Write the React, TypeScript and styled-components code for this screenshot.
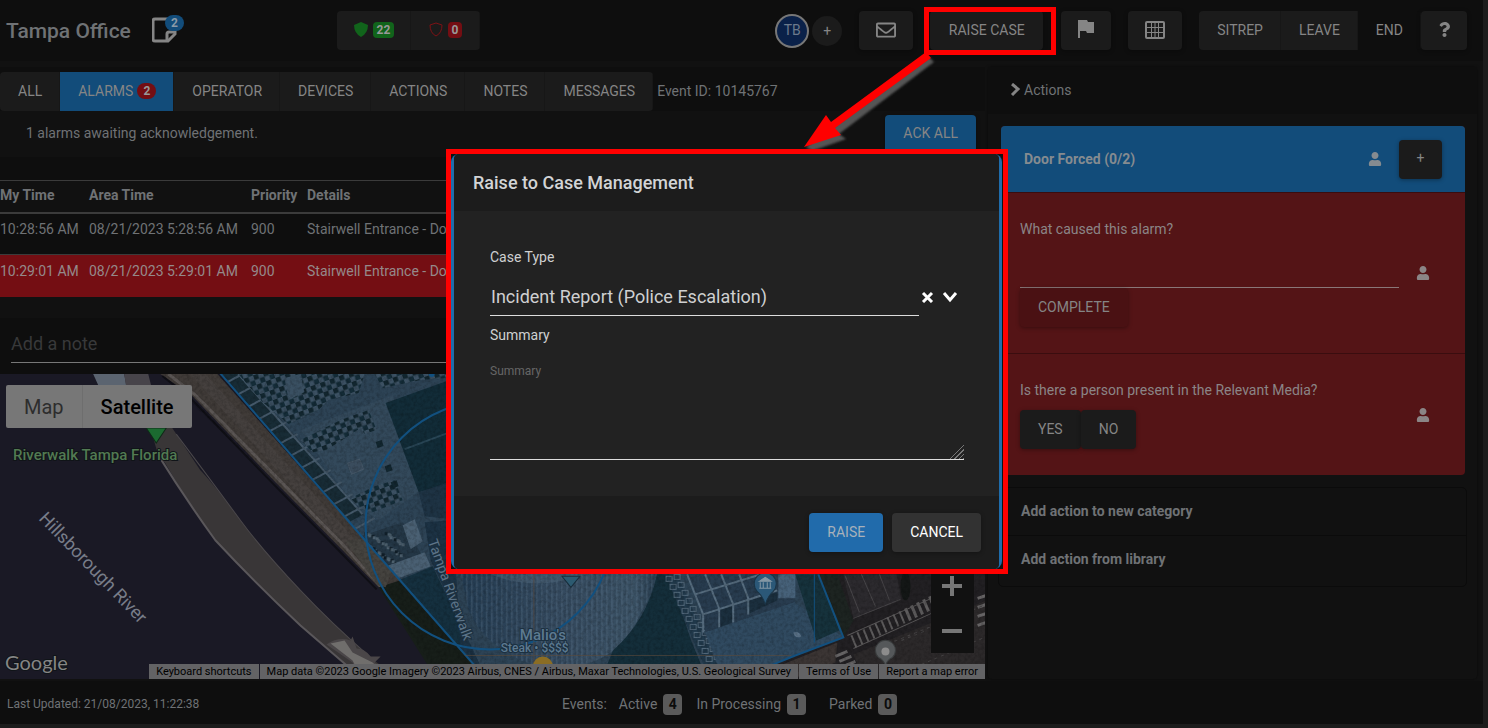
import React from "react";
import styled, { createGlobalStyle } from "styled-components";
import { FaRegEnvelope, FaQuestion, FaUser } from "react-icons/fa";

const c = {
  edge: "#1c1c1c",
  page: "#111111",
  dark: "#0e0e0e",
  button: "#1b1b1b",
  line: "#0b0b0b",
  blue: "#124c7a",
  red: "#740e13",
  taskRed: "#541416",
  text: "#6f7275",
  buttonText: "#858585",
  callout: "#ff0000",
};

const GlobalStyle = createGlobalStyle`
  *, *::before, *::after { box-sizing: border-box; }
  body {
    margin: 0;
    background: ${c.edge};
    color: ${c.text};
    font-family: Roboto, "Liberation Sans", sans-serif;
    font-size: 14px;
    line-height: 20px;
  }
  button, input, select, textarea { font: inherit; color: inherit; }
  a { color: inherit; text-decoration: none; }
`;

const Page = styled.div`
  position: relative;
  display: flex;
  flex-direction: column;
  min-height: 100vh;
  overflow: hidden;
  padding: 0 5px 4px 0;
`;

const Shell = styled.div`
  flex: 1;
  display: flex;
  flex-direction: column;
  background: ${c.page};
`;

const Button = styled.button<{ $tone?: "blue" | "dark" | "red"; $w?: number }>`
  display: inline-flex;
  align-items: center;
  justify-content: center;
  height: 39px;
  padding: ${(p) => (p.$w ? "0 0 2px" : "0 18px 2px")};
  width: ${(p) => (p.$w ? `${p.$w}px` : "auto")};
  border: 0;
  border-radius: 4px;
  color: ${c.buttonText};
  white-space: nowrap;
  cursor: pointer;
  background: ${(p) =>
    p.$tone === "blue" ? c.blue : p.$tone === "dark" ? c.dark : p.$tone === "red" ? "#4a1113" : c.button};
  box-shadow: 0 1px 4px rgba(0, 0, 0, 0.35);
`;

const ButtonGroup = styled.div`
  display: flex;
  border-radius: 4px;
  overflow: hidden;
  & > button {
    border-radius: 0;
    box-shadow: inset -1px 0 0 #171717;
  }
`;

/* ---------- header ---------- */

const Header = styled.header`
  display: flex;
  align-items: center;
  height: 61px;
  padding: 0 16px 0 6px;
  background: ${c.dark};
`;

const Title = styled.h1`
  margin: 0;
  width: 146px;
  font-size: 21px;
  line-height: 28px;
  font-weight: 500;
`;

const NoteButton = styled.button`
  position: relative;
  width: 34px;
  height: 32px;
  padding: 2px 0 0;
  border: 0;
  background: none;
  text-align: left;
`;

const NoteCount = styled.span`
  position: absolute;
  top: 0;
  left: 13px;
  width: 19px;
  height: 16px;
  border-radius: 8px;
  background: ${c.blue};
  color: #8a9aa8;
  font-size: 12px;
  line-height: 16px;
  font-weight: 700;
  text-align: center;
`;

const ShieldGroup = styled(ButtonGroup)`
  margin-left: 151px;
`;

const CountTag = styled.span<{ $bg: string }>`
  margin-left: 5px;
  padding: 0 4px;
  border-radius: 4px;
  background: ${(p) => p.$bg};
  color: #999;
  font-size: 12px;
  line-height: 16px;
  font-weight: 700;
`;

const HeaderTools = styled.div`
  display: flex;
  align-items: center;
  margin-left: auto;
  gap: 17px;
`;

const People = styled.div`
  display: flex;
  align-items: center;
  gap: 3px;
`;

const Avatar = styled.span`
  width: 34px;
  height: 34px;
  border: 2px solid #777;
  border-radius: 50%;
  background: #0a2149;
  color: #6c7a8c;
  line-height: 28px;
  text-align: center;
`;

const RoundButton = styled.button`
  width: 30px;
  height: 30px;
  padding: 0;
  border: 0;
  border-radius: 50%;
  background: ${c.button};
  color: ${c.buttonText};
`;

const RaiseArea = styled.div`
  position: relative;
  margin-right: 1px;
  &::after {
    content: "";
    position: absolute;
    inset: -4px -13px -5px -6px;
    border: 5px solid ${c.callout};
    pointer-events: none;
  }
`;

const EndArea = styled.div`
  display: flex;
`;

/* ---------- main columns ---------- */

const Main = styled.main`
  flex: 1;
  display: grid;
  grid-template-columns: minmax(0, 1fr) 489px;
  gap: 3px;
  padding: 6px 6px 2px 0;
`;

const EventPane = styled.section`
  display: flex;
  flex-direction: column;
  background: ${c.dark};
`;

const TabBar = styled.nav`
  display: flex;
  align-items: center;
  padding-top: 5px;
  gap: 4px;
`;

const BarText = styled.span`
  padding-bottom: 2px;
`;

const TabBadge = styled.span`
  margin-left: 4px;
  width: 19px;
  border-radius: 8px;
  background: ${c.red};
  color: #999;
  font-size: 12px;
  line-height: 16px;
  font-weight: 700;
`;

const AckBar = styled.div`
  display: flex;
  align-items: center;
  justify-content: space-between;
  height: 46px;
  padding: 0 9px 0 26px;
  background: ${c.page};
`;

const AlarmTable = styled.table`
  width: 100%;
  margin-top: 23px;
  border-collapse: collapse;
  table-layout: fixed;
  text-align: left;
  th, td { padding: 0 0 10px; white-space: nowrap; }
  th { height: 32px; padding: 0 0 2px; font-weight: 700; }
  thead tr { background: ${c.page}; border-top: 1px solid #3b3b3b; border-bottom: 2px solid #3b3b3b; }
`;

const AlarmRow = styled.tr<{ $active?: boolean }>`
  height: 42px;
  background: ${(p) => (p.$active ? c.red : c.dark)};
  color: ${(p) => (p.$active ? "#94898a" : c.text)};
  & + & { border-top: 1px solid #3b3b3b; }
`;

const Note = styled.div`
  padding: 0 11px 11px;
  border-top: 21px solid ${c.page};
`;

const NoteInput = styled.input`
  display: block;
  width: 100%;
  height: 45px;
  padding: 7px 0 0;
  border: 0;
  border-bottom: 1px solid #777;
  background: transparent;
  font-size: 18px;
  &::placeholder { color: #38393a; opacity: 1; }
`;

/* ---------- map ---------- */

const MapArea = styled.div`
  position: relative;
  flex: 1;
  min-height: 305px;
  overflow: hidden;
  background: #1a1925;
`;

const MapCanvas = styled.svg`
  position: absolute;
  inset: 0;
  width: 100%;
  height: 100%;
`;

const MapModes = styled.div`
  position: absolute;
  left: 6px;
  top: 11px;
  display: flex;
  background: #777;
  border-radius: 2px;
`;

const MapMode = styled.button<{ $on?: boolean }>`
  height: 43px;
  padding: 1px 18px 0;
  border: 0;
  border-left: ${(p) => (p.$on ? "1px solid #6e6e6e" : "0")};
  background: none;
  color: ${(p) => (p.$on ? "#000" : "#2d2d2d")};
  font-size: 20px;
  font-weight: ${(p) => (p.$on ? 500 : 400)};
`;

const ZoomPad = styled.div`
  position: absolute;
  right: 11px;
  bottom: 26px;
  display: flex;
  flex-direction: column;
  background: ${c.page};
`;

const ZoomButton = styled.button`
  display: flex;
  align-items: center;
  justify-content: center;
  width: 43px;
  height: 45px;
  padding: 0 1px 0 0;
  border: 0;
  background: none;
`;

const Attribution = styled.div`
  position: absolute;
  right: 0;
  bottom: 0;
  display: flex;
  gap: 1px;
  color: #000;
  font-size: 11px;
  line-height: 15px;
  white-space: nowrap;
  & > * { padding: 0 7px; background: #636365; }
`;

/* ---------- actions column ---------- */

const ActionsPane = styled.aside`
  border-radius: 4px;
  background: ${c.page};
  box-shadow: 0 0 3px rgba(0, 0, 0, 0.6);
`;

const ActionsHead = styled.h2`
  display: flex;
  align-items: center;
  gap: 3px;
  height: 47px;
  margin: 0;
  padding: 0 0 2px 22px;
  background: ${c.dark};
  font-size: 14px;
  font-weight: 400;
`;

const TaskCard = styled.section`
  margin: 12px 12px 0 13px;
  border-radius: 4px;
  overflow: hidden;
  background: ${c.taskRed};
`;

const TaskHead = styled.div`
  display: flex;
  align-items: center;
  height: 66px;
  padding: 0 23px;
  background: ${c.blue};
  color: #858b90;
  h3 { flex: 1; margin: 0; font-size: 14px; font-weight: 700; }
  svg { margin-right: 17px; }
`;

const Task = styled.div`
  display: flex;
  align-items: center;
  padding: 26px 35px 26px 19px;
  border-top: 1px solid #3a0d0f;
  color: #8b8586;
`;

const TaskBody = styled.div`
  flex: 1;
  margin-right: 17px;
`;

const AnswerLabel = styled.label`
  display: block;
`;

const AnswerInput = styled.input`
  display: block;
  width: 100%;
  height: 49px;
  border: 0;
  border-bottom: 1px solid #8a7778;
  background: transparent;
`;

const Answers = styled.div`
  display: flex;
  margin-top: 10px;
`;

const AddList = styled.div`
  margin: 12px 10px 0;
  padding-bottom: 2px;
  border: 1px solid ${c.line};
  border-radius: 5px;
`;

const AddButton = styled.button`
  display: block;
  width: 100%;
  height: 48px;
  padding: 0 22px 2px;
  border: 0;
  border-bottom: 1px solid ${c.line};
  background: none;
  font-weight: 700;
  text-align: left;
  &:last-child { border-bottom: 0; }
`;

/* ---------- footer ---------- */

const Footer = styled.footer`
  display: flex;
  align-items: center;
  height: 43px;
  padding: 3px 0 0 7px;
  background: ${c.dark};
`;

const Updated = styled.span`
  flex: 0 0 555px;
  font-size: 12px;
`;

const Events = styled.div`
  display: flex;
  align-items: center;
`;

const EventStat = styled.span`
  display: flex;
  align-items: center;
  margin-left: 12px;
  & + & { margin-left: 14px; }
  &:last-child { margin-left: 23px; }
`;

const StatTag = styled.b`
  margin-left: 6px;
  width: 19px;
  border-radius: 4px;
  background: #5a5a5a;
  color: #0c0c0c;
  line-height: 21px;
  text-align: center;
`;

/* ---------- dialog ---------- */

const Backdrop = styled.div`
  position: absolute;
  inset: 0 34px 0 0;
  display: flex;
  align-items: flex-start;
  justify-content: center;
  padding-top: 149px;
  pointer-events: none;
`;

const DialogCallout = styled.div`
  width: 562px;
  border: 5px solid ${c.callout};
  background: ${c.page};
  pointer-events: auto;
`;

const DialogRing = styled.div`
  border: solid #1f6cab;
  border-width: 0 3px;
  border-radius: 8px;
  margin: 0 1px 0 0;
`;

const Dialog = styled.section`
  border-radius: 5px;
  overflow: hidden;
  background: #222222;
`;

const DialogHead = styled.h2`
  margin: 0;
  padding: 17px 19px 16px;
  background: ${c.edge};
  color: #d2d4d6;
  font-size: 18px;
  line-height: 24px;
  font-weight: 500;
`;

const DialogBody = styled.div`
  padding: 36px 35px 36px 36px;
  color: #cfd0d1;
`;

const FieldLabel = styled.label`
  display: block;
`;

const SelectRow = styled.div`
  display: flex;
  align-items: center;
  margin: 10px 0 9px;
`;

const TypeSelect = styled.select`
  appearance: none;
  width: 429px;
  height: 39px;
  padding: 2px 1px 0;
  border: 0;
  border-bottom: 1px solid #ddd;
  border-radius: 0;
  background: transparent;
  font-size: 18px;
`;

const IconButton = styled.button`
  display: flex;
  padding: 0;
  margin-left: 2px;
  border: 0;
  background: none;
  color: #fff;
  & + & { margin-left: 8px; }
`;

const SummaryBox = styled.textarea`
  display: block;
  width: 100%;
  height: 100px;
  margin-top: 15px;
  padding: 2px 0;
  border: 0;
  border-bottom: 1px solid #ddd;
  background: transparent;
  color-scheme: dark;
  font-size: 12px;
  line-height: 18px;
  &::placeholder { color: #666; opacity: 1; }
  &::-webkit-resizer {
    background:
      linear-gradient(135deg, #222 50%, transparent 50%),
      repeating-linear-gradient(135deg, #222 0 2px, #777 2px 3px);
  }
`;

const DialogFoot = styled.div`
  display: flex;
  justify-content: flex-end;
  gap: 9px;
  padding: 17px 18px;
  background: ${c.edge};
`;

const DialogButton = styled(Button)<{ $primary?: boolean }>`
  background: ${(p) => (p.$primary ? "#216bab" : "#323232")};
  color: ${(p) => (p.$primary ? "#a7b1ba" : "#fff")};
`;

const ArrowLayer = styled.svg`
  position: absolute;
  left: 796px;
  top: 48px;
  pointer-events: none;
`;

/* ---------- map drawing ---------- */

const range = (n: number) => Array.from({ length: n }, (_, i) => i);

function SatelliteMap() {
  return (
    <MapCanvas viewBox="0 374 985 305" preserveAspectRatio="xMinYMin slice" aria-label="Satellite map">
      <defs>
        <clipPath id="campus">
          <path d="M217 370 L740 300 L817 574 L842 637 L794 655 L735 679 L486 679 L367 543Z" />
        </clipPath>
        <pattern id="checker" width="10" height="10" patternUnits="userSpaceOnUse" patternTransform="translate(262 372) rotate(-20)">
          <rect width="10" height="10" fill="#3c5163" />
          <rect width="5" height="5" fill="#12262f" />
          <rect x="5" y="5" width="5" height="5" fill="#142c38" />
        </pattern>
        <pattern id="ribs" width="5" height="10" patternUnits="userSpaceOnUse">
          <rect width="2" height="10" fill="#566e83" />
        </pattern>
        <linearGradient id="tower" x1="0" x2="1" y1="0" y2="0">
          <stop offset="0" stopColor="#223a50" />
          <stop offset="0.5" stopColor="#34495e" />
          <stop offset="0.9" stopColor="#3a5164" />
          <stop offset="1" stopColor="#263b4d" />
        </linearGradient>
        <filter id="grain" x="0" y="0" width="100%" height="100%">
          <feTurbulence type="fractalNoise" baseFrequency="0.3" numOctaves="3" seed="4" />
          <feColorMatrix type="matrix" values="0 0 0 0 0  0 0 0 0 0  0 0 0 0 0  1.6 0 0 0 -0.6" />
          <feComposite in2="SourceAlpha" operator="in" />
        </filter>
      </defs>
      <rect x="0" y="374" width="985" height="305" fill="#1a1925" />

      {/* promenade and planting */}
      <path d="M160 374 L217 374 L367 543 L486 679 L440 679 L412 630 L378 587 L340 548 L275 482 L192 396Z" fill="#403b38" />
      <path d="M190 374 L205 374 L360 545 L350 552Z" fill="#4a4542" opacity="0.6" />
      <path d="M378 587 L400 580 L486 679 L436 679Z" fill="#171e19" />
      <path d="M168 374 L194 394 L277 478 L342 544 L380 586" fill="none" stroke="#5b5654" strokeWidth="3" />
      <path d="M162 376 L190 398 L272 483 L337 549 L376 589" fill="none" stroke="#0f0f15" strokeWidth="2" />
      <path d="M345 541 L368 537 L393 566 L385 587 L377 585Z" fill="#45433f" />

      {/* boat and floating walkway */}
      <path d="M93 374 L124 374 L126 385 L98 385Z" fill="#5b6470" />
      <path d="M124 374 L148 374 L152 390 L126 387Z" fill="#47444a" />
      <path
        d="M118 428 L150 428 L158 455 L165 463 Q186 500 215 540 Q258 586 300 625 L352 670 L364 679 L398 679 L370 657 Q330 622 300 590 Q262 550 240 520 Q212 482 200 470 L172 428Z"
        fill="#393637"
      />
      <path d="M158 455 Q186 500 215 540 Q258 586 300 625 L352 670 L364 679" fill="none" stroke="#5a575a" strokeWidth="2" />
      <path d="M176 434 Q212 482 240 520 Q262 550 300 590 Q330 622 370 657" fill="none" stroke="#4a474a" strokeWidth="1" />
      <path d="M326 644 Q338 636 350 640 L352 636 L356 648 Q364 648 370 656 L380 656 L374 662 L394 676 L396 679 L358 679 L352 662Z" fill="#4a4648" />
      <path d="M330 643 L344 640 L352 652 L372 662 L384 674 L390 679 L362 679 L352 660Z" fill="#706e6c" />

      {/* campus */}
      <g clipPath="url(#campus)">
        <rect x="200" y="360" width="660" height="330" fill="#2d4355" />
        <path d="M300 430 L392 395 L420 490 L378 520 L350 500Z" fill="#33495b" />
        <path d="M385 403 L460 376 L460 480 L418 492Z" fill="#122c38" />
        <path d="M404 449 L460 428" stroke="#294656" strokeWidth="2" />
        <path d="M217 374 L240 374 L363 514 L350 521Z" fill="#182c36" />
        {range(13).map((i) => (
          <path key={i} d={`M${216 + i * 11} ${388 + i * 12} l26 -14`} stroke="#45596a" strokeWidth="2" />
        ))}
        <path d="M238 374 L362 514" stroke="#45596a" strokeWidth="2" />
        <path d="M238 374 L364 374 L358 393 L328 400 L318 410 L288 424 L262 402Z" fill="url(#checker)" />
        <path d="M284 378 L300 374 L304 392 L288 400Z" fill="#3a5062" />
        <path d="M374 374 L446 374 L446 378 L420 380 L382 388Z" fill="url(#checker)" />
        <path d="M300 440 L340 420 L368 410 L376 430 L364 434 L360 428 L326 450 L312 452Z" fill="url(#checker)" />
        <path d="M350 498 L374 486 L394 480 L402 500 L372 512 L360 508Z" fill="url(#checker)" />
        <path d="M375 442 l6 -2 2 6 -6 2z M384 466 l6 -2 2 6 -6 2z M390 482 l6 -2 2 6 -6 2z" fill="#12262f" />
        <path d="M347 463 l12 -4 4 10 -12 5z" fill="#3a4c5d" stroke="#465868" />
        <path d="M418 492 L460 478 L460 520 L424 516Z" fill="#1e3344" />
        <path d="M345 541 L402 522 L424 560 L380 575Z" fill="#243746" />
        {range(60).map((i) => (
          <rect
            key={i}
            x={364 + ((i * 17) % 37) + (i % 2)}
            y={532 + ((i * 23) % 36)}
            width="3"
            height="3"
            fill={i % 3 ? "#4c5f6d" : "#101e28"}
          />
        ))}
        <path d="M402 525 L414 519 L422 541 L410 549Z M380 568 L424 552 L430 566 L387 582Z" fill="#4a6073" />
        <path d="M384 586 L432 566 L486 679 L450 660Z" fill="#15303f" />
        <path d="M424 522 L452 520 L462 679 L486 679 L430 560Z" fill="#1c3244" />

        {/* round tower */}
        <path d="M457 560 L655 560 Q654 592 640 612 Q624 650 590 662 Q555 674 520 660 Q480 640 468 610Z" fill="url(#tower)" />
        <path d="M457 560 L655 560 Q654 592 640 612 Q624 650 590 662 Q555 674 520 660 Q480 640 468 610Z" fill="url(#ribs)" opacity="0.35" />
        <path d="M490 574 Q534 592 586 574Z" fill="#4a6175" opacity="0.6" />
        <path d="M612 650 Q646 620 656 574 L668 574 L690 640 L706 679 L600 679Z" fill="#142e3a" />

        {/* colonnade */}
        <path d="M664 574 L676 574 L716 664 L704 668Z" fill="#20384a" />
        {range(11).map((i) => (
          <g key={i} fill="none" stroke="#53697b" strokeWidth="1">
            <rect x={665 + i * 4} y={576 + i * 8} width="6" height="5" />
            <rect x={673 + i * 4} y={574 + i * 8} width="6" height="5" />
          </g>
        ))}

        {/* glass hall and plaza */}
        <path d="M684 566 L793 566 L793 602 L704 632 L702 614Z" fill="#283c4f" />
        <path d="M718 608 L731 604 L731 622 L718 627Z M748 600 L776 592 L776 600 L748 613Z" fill="#1b2f3e" />
        <path
          d="M686 574 L702 614 V632 M704 574 L718 608 V627 M720 574 L732 604 V622 M738 574 L747 598 V614 M694 594 L760 574 M702 614 L776 590"
          fill="none"
          stroke="#566c7e"
          strokeWidth="2"
        />
        <path d="M704 632 L793 602 L842 637 L735 679 L722 679Z" fill="#304a60" />
        <path d="M777 574 h17 v24 h-17z" fill="#47627a" />
        <path d="M794 574 L817 574 L838 630 L815 640 L806 612Z" fill="#16323c" />
        <path d="M792 632 q6 -2 8 4 q-6 3 -8 -4z" fill="#5a7288" />
      </g>

      {/* streets and crossings east of the campus */}
      <path d="M817 574 L985 574 L985 679 L735 679 L794 655 L842 637Z" fill="#222023" />
      <path d="M817 574 L836 574 L852 620 L842 637Z" fill="#1d2421" />
      <path d="M842 574 L895 574 L900 600 L852 618Z" fill="#2c2a2e" />
      <path d="M852 654 L985 600 L985 679 L862 679Z" fill="#2c292a" />
      <path d="M796 658 L836 642 L834 662 L790 679 L744 679Z" fill="#3b3534" />
      {range(14).map((i) => (
        <path key={i} d={`M${850 + i * 6} ${635 - i * 3} l5 12`} stroke="#5e5c5d" strokeWidth={i > 8 ? 3 : 2} />
      ))}
      <path d="M846 635 L930 598 M852 648 L930 613" stroke="#5a5859" strokeWidth="1" />
      {range(4).map((i) => (
        <path key={i} d={`M${834 + i * 4} ${656 + i * 5} l12 -5 M976 ${598 + i * 9} l9 -3`} stroke="#666465" strokeWidth="3" />
      ))}
      <path d="M844 576 L858 612 M860 574 L874 606 M878 574 L888 600 M852 618 L899 599" stroke="#484649" strokeWidth="1" fill="none" />
      <ellipse cx="904" cy="586" rx="5" ry="14" fill="#141716" />
      <path d="M880 646 L985 604 M920 664 L985 636 M900 640 L925 630" stroke="#464445" fill="none" strokeDasharray="3 4" />

      <path d="M160 374 L985 374 L985 679 L440 679 L378 587 L275 482Z" filter="url(#grain)" opacity="0.25" />

      {/* coverage boundary */}
      <g fill="none" stroke="#12507f" strokeWidth="2">
        <path d="M217 370 L367 543 L486 679 M817 574 L842 637 L794 655 L735 679" />
        <circle cx="489" cy="525" r="124" />
        <path d="M813 574 v68" strokeWidth="1" />
      </g>
      <circle cx="431" cy="374" r="3" fill="#12507f" />
      <path d="M533 574 V664 M464 655 H790" stroke="#5c4a3a" strokeWidth="1" opacity="0.6" />

      {/* place markers */}
      <path d="M146 428 L166 428 L156 443Z" fill="#1b6a30" stroke="#0f2a18" />
      <path d="M561 576 h18 l-9 11z" fill="#2c5a70" stroke="#182c3a" />
      <path d="M764 604 q-3 -9 -8 -13 a11 11 0 1 1 16 0 q-5 4 -8 13z" fill="#2b5878" stroke="#1b3446" />
      <path d="M758 581 l6 -4 l6 4z M759 582 v6 M762 582 v6 M766 582 v6 M769 582 v6 M758 588 h12" stroke="#8598a5" fill="#8598a5" />
      <path d="M884 665 q-2 -6 -7 -8 a10 10 0 1 1 14 0 q-5 2 -7 8z" fill="#55585a" stroke="#3a3d3e" />
      <circle cx="884" cy="651" r="4" fill="#8c8c8c" />
      <circle cx="542" cy="666" r="10" fill="#8b6d24" />

      <g fontFamily="Roboto, sans-serif" stroke="#101418" strokeWidth="2" paintOrder="stroke">
        <text x="13" y="460" fontSize="15" fontWeight="500" fill="#527a52">
          Riverwalk Tampa Florida
        </text>
        <text fontSize="18" fill="#787d89" strokeWidth="0" transform="translate(38 519) rotate(46)">
          Hillsborough River
        </text>
        <text fontSize="14" fill="#5d7488" stroke="#1c3040" transform="translate(427 541) rotate(70)">
          Tampa Riverwalk
        </text>
        <text x="519" y="640" fontSize="15" fontWeight="500" fill="#5d7a91" stroke="#1c3040">
          Malio's
        </text>
        <text x="500" y="652" fontSize="12" fontWeight="500" fill="#5d7a91" stroke="#1c3040">
          Steak • $$$$
        </text>
        <text x="5" y="670" fontSize="20" fontFamily="Lato, sans-serif" fill="#858585">
          Google
        </text>
      </g>
    </MapCanvas>
  );
}

const NoteGlyph = () => (
  <svg width="25" height="26" viewBox="0 0 25 26" aria-hidden="true">
    <path d="M3 2 H22 Q23 2 23 3 V17 L16 24 H3 Q1 24 1 22 V4 Q1 2 3 2Z" fill="none" stroke="#858585" strokeWidth="3" />
    <path d="M23 15 H17 Q15 15 15 17 V24" fill="none" stroke="#858585" strokeWidth="3" />
  </svg>
);

const FlagGlyph = () => (
  <svg width="18" height="20" viewBox="0 0 18 20" aria-hidden="true">
    <path d="M1 18 V0 H10 L11 2 H17 V13 H10 L9 11 H3 V18Z" fill="#858585" />
  </svg>
);

const GridGlyph = () => (
  <svg width="20" height="18" viewBox="0 0 20 18" aria-hidden="true">
    <rect x="1" y="1" width="18" height="16" rx="1" fill="none" stroke="#858585" strokeWidth="2" />
    <path d="M6.5 1 V17 M13.5 1 V17 M10 1 V17 M1 6.5 H19 M1 11.5 H19" stroke="#858585" strokeWidth="1" />
  </svg>
);

const ShieldOutline = () => (
  <svg width="14" height="15" viewBox="0 0 14 15" aria-hidden="true">
    <path d="M7 1 L13 3 Q13 11 7 14 Q1 11 1 3Z" fill="none" stroke="#7c1216" />
  </svg>
);

const ShieldSolid = () => (
  <svg width="14" height="15" viewBox="0 0 14 15" aria-hidden="true">
    <path d="M7 0 L14 3 Q14 11 7 15 Q0 11 0 3Z" fill="#11641b" />
  </svg>
);

const ChevronRight = () => (
  <svg width="11" height="13" viewBox="0 0 11 13" aria-hidden="true">
    <path d="M2 1 L8 6 L2 12" fill="none" stroke="#858585" strokeWidth="3" />
  </svg>
);

const ChevronDown = () => (
  <svg width="16" height="12" viewBox="0 0 16 12" aria-hidden="true">
    <path d="M2 2 L8 9 L14 2" fill="none" stroke="#fff" strokeWidth="3" />
  </svg>
);

const Cross = () => (
  <svg width="13" height="12" viewBox="0 0 13 12" aria-hidden="true">
    <path d="M2 2 L11 11 M11 2 L2 11" fill="none" stroke="#fff" strokeWidth="3" />
  </svg>
);

export default function App() {
  return (
    <Page>
      <GlobalStyle />
      <Shell>
        <Header>
          <Title>Tampa Office</Title>
          <NoteButton aria-label="Notes">
            <NoteGlyph />
            <NoteCount>2</NoteCount>
          </NoteButton>
          <ShieldGroup>
            <Button $w={74} aria-label="Armed">
              <ShieldSolid />
              <CountTag $bg="#11641b">22</CountTag>
            </Button>
            <Button $w={69} aria-label="Disarmed">
              <ShieldOutline />
              <CountTag $bg="#740e13">0</CountTag>
            </Button>
          </ShieldGroup>
          <HeaderTools>
            <People>
              <Avatar>TB</Avatar>
              <RoundButton>+</RoundButton>
            </People>
            <Button $w={54} aria-label="Mail">
              <FaRegEnvelope size={20} />
            </Button>
            <RaiseArea>
              <Button $w={113}>RAISE CASE</Button>
            </RaiseArea>
            <Button $w={50} aria-label="Flag">
              <FlagGlyph />
            </Button>
            <Button $w={54} aria-label="Grid">
              <GridGlyph />
            </Button>
            <EndArea>
              <ButtonGroup>
                <Button>SITREP</Button>
                <Button>LEAVE</Button>
                <Button $tone="dark">END</Button>
              </ButtonGroup>
              <Button $w={46} aria-label="Help">
                <FaQuestion size={15} />
              </Button>
            </EndArea>
          </HeaderTools>
        </Header>

        <Main>
          <EventPane>
            <TabBar>
              <ButtonGroup>
                <Button>ALL</Button>
                <Button $tone="blue">
                  ALARMS<TabBadge>2</TabBadge>
                </Button>
                <Button>OPERATOR</Button>
                <Button>DEVICES</Button>
                <Button>ACTIONS</Button>
                <Button>NOTES</Button>
                <Button>MESSAGES</Button>
              </ButtonGroup>
              <BarText>Event ID: 10145767</BarText>
            </TabBar>
            <AckBar>
              <BarText>1 alarms awaiting acknowledgement.</BarText>
              <Button $tone="blue">ACK ALL</Button>
            </AckBar>
            <AlarmTable>
              <colgroup>
                <col width="89" />
                <col width="162" />
                <col width="56" />
                <col />
              </colgroup>
              <thead>
                <tr>
                  <th>My Time</th>
                  <th>Area Time</th>
                  <th>Priority</th>
                  <th>Details</th>
                </tr>
              </thead>
              <tbody>
                <AlarmRow>
                  <td>10:28:56 AM</td>
                  <td>08/21/2023 5:28:56 AM</td>
                  <td>900</td>
                  <td>Stairwell Entrance - Door</td>
                </AlarmRow>
                <AlarmRow $active>
                  <td>10:29:01 AM</td>
                  <td>08/21/2023 5:29:01 AM</td>
                  <td>900</td>
                  <td>Stairwell Entrance - Door</td>
                </AlarmRow>
              </tbody>
            </AlarmTable>
            <Note>
              <NoteInput aria-label="Add a note" placeholder="Add a note" />
            </Note>
            <MapArea>
              <SatelliteMap />
              <MapModes>
                <MapMode>Map</MapMode>
                <MapMode $on>Satellite</MapMode>
              </MapModes>
              <ZoomPad>
                <ZoomButton aria-label="Zoom in">
                  <svg width="20" height="20">
                    <path d="M10 0 V20 M0 10 H20" stroke="#777" strokeWidth="4" />
                  </svg>
                </ZoomButton>
                <ZoomButton aria-label="Zoom out">
                  <svg width="20" height="20">
                    <path d="M0 10 H20" stroke="#777" strokeWidth="4" />
                  </svg>
                </ZoomButton>
              </ZoomPad>
              <Attribution>
                <a href="#shortcuts">Keyboard shortcuts</a>
                <span>
                  Map data ©2023 Google Imagery ©2023 Airbus, CNES / Airbus, Maxar Technologies, U.S. Geological Survey
                </span>
                <a href="#terms">Terms of Use</a>
                <a href="#report">Report a map error</a>
              </Attribution>
            </MapArea>
          </EventPane>

          <ActionsPane>
            <ActionsHead>
              <ChevronRight />
              Actions
            </ActionsHead>
            <TaskCard>
              <TaskHead>
                <h3>Door Forced (0/2)</h3>
                <FaUser size={14} />
                <Button $w={43} aria-label="Add action">
                  +
                </Button>
              </TaskHead>
              <Task>
                <TaskBody>
                  <AnswerLabel htmlFor="cause">What caused this alarm?</AnswerLabel>
                  <AnswerInput id="cause" />
                  <Button $tone="red">COMPLETE</Button>
                </TaskBody>
                <FaUser size={14} />
              </Task>
              <Task>
                <TaskBody>
                  <span>Is there a person present in the Relevant Media?</span>
                  <Answers>
                    <Button>YES</Button>
                    <Button>NO</Button>
                  </Answers>
                </TaskBody>
                <FaUser size={14} />
              </Task>
            </TaskCard>
            <AddList>
              <AddButton>Add action to new category</AddButton>
              <AddButton>Add action from library</AddButton>
            </AddList>
          </ActionsPane>
        </Main>

        <Footer>
          <Updated>Last Updated: 21/08/2023, 11:22:38</Updated>
          <Events>
            <span>Events:</span>
            <EventStat>
              Active<StatTag>4</StatTag>
            </EventStat>
            <EventStat>
              In Processing<StatTag>1</StatTag>
            </EventStat>
            <EventStat>
              Parked<StatTag>0</StatTag>
            </EventStat>
          </Events>
        </Footer>
      </Shell>

      <ArrowLayer width="150" height="110" viewBox="796 48 150 110" aria-hidden="true">
        <defs>
          <filter id="soft">
            <feGaussianBlur stdDeviation="1" />
          </filter>
        </defs>
        <path d="M929 57 L934 62 L839 134 L846 139 L812 151 L806 147Z" fill="#555" filter="url(#soft)" />
        <path d="M926 52 L931 58 L835 128 L841 135 L804 147 L826 115 L831 122Z" fill="#ff0000" />
      </ArrowLayer>

      <Backdrop>
        <DialogCallout>
          <DialogRing>
            <Dialog role="dialog" aria-labelledby="dialog-title">
              <DialogHead id="dialog-title">Raise to Case Management</DialogHead>
              <DialogBody>
                <FieldLabel htmlFor="case-type">Case Type</FieldLabel>
                <SelectRow>
                  <TypeSelect id="case-type">
                    <option>Incident Report (Police Escalation)</option>
                  </TypeSelect>
                  <IconButton aria-label="Clear">
                    <Cross />
                  </IconButton>
                  <IconButton aria-label="Open list">
                    <ChevronDown />
                  </IconButton>
                </SelectRow>
                <FieldLabel htmlFor="summary">Summary</FieldLabel>
                <SummaryBox id="summary" placeholder="Summary" />
              </DialogBody>
              <DialogFoot>
                <DialogButton $primary>RAISE</DialogButton>
                <DialogButton>CANCEL</DialogButton>
              </DialogFoot>
            </Dialog>
          </DialogRing>
        </DialogCallout>
      </Backdrop>
    </Page>
  );
}
